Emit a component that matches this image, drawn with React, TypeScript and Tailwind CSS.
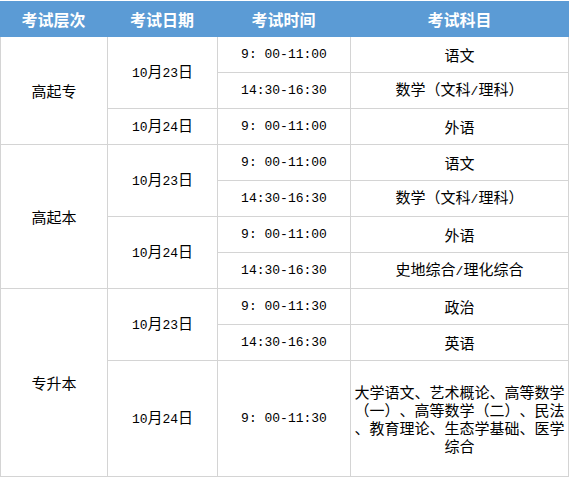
import React from "react"

type Row = {
  level?: string
  levelSpan?: number
  date?: string
  dateSpan?: number
  time: string
  subject: string[]
}

const spanClass: Record<number, string> = {
  1: "row-span-1",
  2: "row-span-2",
  3: "row-span-3",
  4: "row-span-4",
}

const rows: Row[] = [
  { level: "高起专", levelSpan: 3, date: "10月23日", dateSpan: 2, time: "9: 00-11:00", subject: ["语文"] },
  { time: "14:30-16:30", subject: ["数学（文科/理科）"] },
  { date: "10月24日", dateSpan: 1, time: "9: 00-11:00", subject: ["外语"] },
  { level: "高起本", levelSpan: 4, date: "10月23日", dateSpan: 2, time: "9: 00-11:00", subject: ["语文"] },
  { time: "14:30-16:30", subject: ["数学（文科/理科）"] },
  { date: "10月24日", dateSpan: 2, time: "9: 00-11:00", subject: ["外语"] },
  { time: "14:30-16:30", subject: ["史地综合/理化综合"] },
  { level: "专升本", levelSpan: 3, date: "10月23日", dateSpan: 2, time: "9: 00-11:30", subject: ["政治"] },
  { time: "14:30-16:30", subject: ["英语"] },
  {
    date: "10月24日",
    dateSpan: 1,
    time: "9: 00-11:30",
    subject: ["大学语文、艺术概论、高等数学", "（一）、高等数学（二）、民法", "、教育理论、生态学基础、医学", "综合"],
  },
]

// latin runs get the narrow mono face; full-width punctuation keeps a full 15px box
function Mixed({ text }: { text: string }) {
  const parts = text.match(/[\x20-\x7e]+|[（）、]|[^\x20-\x7e（）、]+/g) ?? []
  return (
    <>
      {parts.map((p, i) => {
        if (/[\x20-\x7e]/.test(p[0]))
          return (
            <span key={i} className="font-['Liberation_Mono',monospace] text-[13px]">
              {p}
            </span>
          )
        if (/[（）、]/.test(p))
          return (
            <span key={i} className="inline-block w-[15px] text-center">
              {p}
            </span>
          )
        return <span key={i}>{p}</span>
      })}
    </>
  )
}

const cell = "bg-white flex flex-col items-center justify-center text-center"

export default function App() {
  const headers = ["考试层次", "考试日期", "考试时间", "考试科目"]

  return (
    <div className="w-[569px] bg-white pt-px font-['Noto_Sans_CJK_SC',sans-serif] text-[15px] leading-[18px] text-black [text-spacing-trim:space-all]">
      {/* header */}
      <div className="grid h-[36px] grid-cols-[107px_110px_133px_219px] bg-[#5b9bd5]">
        {headers.map((h) => (
          <div key={h} className="flex items-center justify-center text-[16px] font-bold text-white">
            {h}
          </div>
        ))}
      </div>

      {/* body */}
      <div className="grid grid-cols-[106px_109px_132px_217px] grid-rows-[repeat(9,35px)_115px] gap-px bg-[#d4d4d4] px-px pb-px">
        {rows.map((r, i) => (
          <React.Fragment key={i}>
            {r.level && <div className={`${cell} col-start-1 ${spanClass[r.levelSpan ?? 1]}`}>{r.level}</div>}
            {r.date && (
              <div className={`${cell} col-start-2 ${spanClass[r.dateSpan ?? 1]}`}>
                <div>
                  <Mixed text={r.date} />
                </div>
              </div>
            )}
            <div className={`${cell} col-start-3`}>
              <Mixed text={r.time} />
            </div>
            <div className={`${cell} col-start-4`}>
              {r.subject.map((line) => (
                <div key={line} className="whitespace-nowrap">
                  <Mixed text={line} />
                </div>
              ))}
            </div>
          </React.Fragment>
        ))}
      </div>
    </div>
  )
}
